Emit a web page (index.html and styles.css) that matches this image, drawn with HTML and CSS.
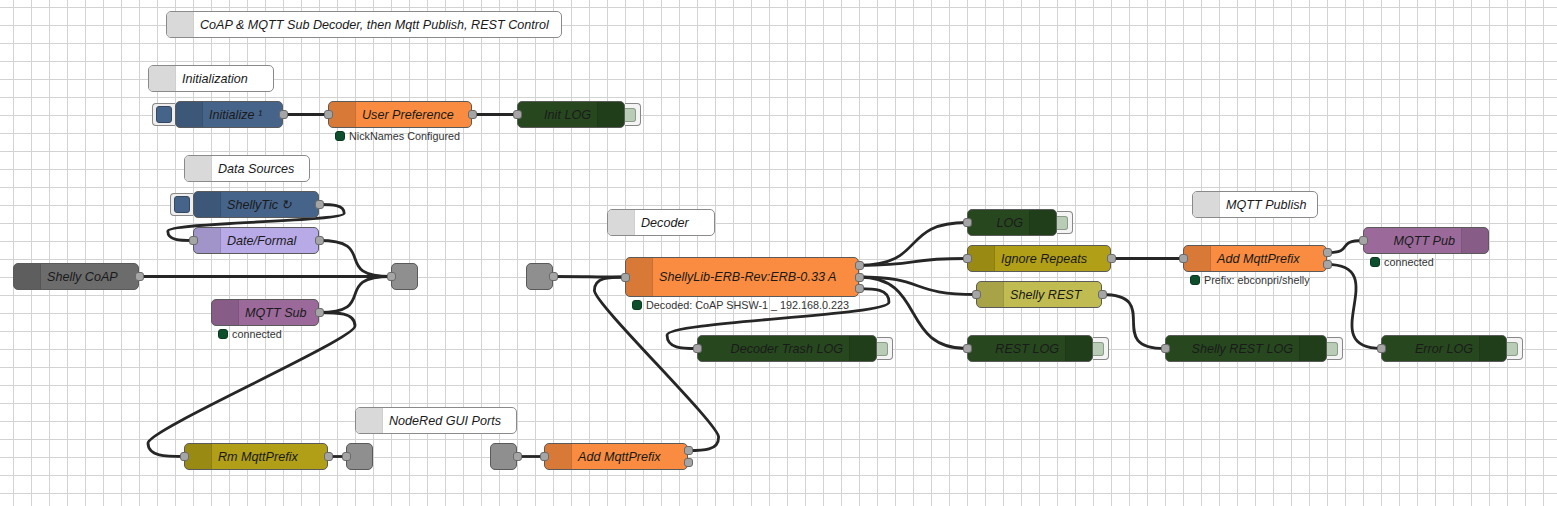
FILE: index.html
```html
<!DOCTYPE html>
<html lang="en">
    <head>
        <meta charset="UTF-8">
        <title>Shelly flow</title>
        <link rel="stylesheet" href="styles.css">
    </head>
    <body>
        <div class="canvas">
            <svg class="wires" id="wires" width="1557" height="506"></svg>

            <!-- comments -->
            <div class="node comment" id="c-title"><div class="icon"></div><span class="label">CoAP &amp; MQTT Sub Decoder, then Mqtt Publish, REST Control</span></div>
            <div class="node comment" id="c-init"><div class="icon"></div><span class="label">Initialization</span></div>
            <div class="node comment" id="c-src"><div class="icon"></div><span class="label">Data Sources</span></div>
            <div class="node comment" id="c-dec"><div class="icon"></div><span class="label">Decoder</span></div>
            <div class="node comment" id="c-pub"><div class="icon"></div><span class="label">MQTT Publish</span></div>
            <div class="node comment" id="c-gui"><div class="icon"></div><span class="label">NodeRed GUI Ports</span></div>

            <!-- initialization -->
            <div class="node inject" id="n-init">
                <div class="ibtn"><span></span></div>
                <div class="icon"></div><span class="label">Initialize ¹</span>
                <i class="port out"></i>
            </div>
            <div class="node orange" id="n-pref">
                <div class="icon"></div><span class="label">User Preference</span>
                <i class="port in"></i><i class="port out"></i>
                <div class="status"><b></b>NickNames Configured</div>
            </div>
            <div class="node debug right" id="n-initlog">
                <div class="dbtn"><span></span></div>
                <div class="icon"></div><span class="label">Init LOG</span>
                <i class="port in"></i>
            </div>

            <!-- data sources -->
            <div class="node inject" id="n-tic">
                <div class="ibtn"><span></span></div>
                <div class="icon"></div><span class="label">ShellyTic ↻</span>
                <i class="port out"></i>
            </div>
            <div class="node lavender" id="n-date">
                <div class="icon"></div><span class="label">Date/Formal</span>
                <i class="port in"></i><i class="port out"></i>
            </div>
            <div class="node grey" id="n-coap">
                <div class="icon"></div><span class="label">Shelly CoAP</span>
                <i class="port out"></i>
            </div>
            <div class="node link" id="n-jout"><i class="port in"></i></div>
            <div class="node purple" id="n-msub">
                <div class="icon"></div><span class="label">MQTT Sub</span>
                <i class="port out"></i>
                <div class="status"><b></b>connected</div>
            </div>

            <!-- decoder -->
            <div class="node link" id="n-jin"><i class="port out"></i></div>
            <div class="node orange" id="n-lib">
                <div class="icon"></div><span class="label">ShellyLib-ERB-Rev:ERB-0.33 A</span>
                <i class="port in"></i>
                <i class="port out o3a"></i><i class="port out o3b"></i><i class="port out o3c"></i>
                <div class="status"><b></b>Decoded: CoAP SHSW-1 _ 192.168.0.223</div>
            </div>
            <div class="node debug right" id="n-log">
                <div class="dbtn"><span></span></div>
                <div class="icon"></div><span class="label">LOG</span>
                <i class="port in"></i>
            </div>
            <div class="node olive" id="n-ign">
                <div class="icon"></div><span class="label">Ignore Repeats</span>
                <i class="port in"></i><i class="port out"></i>
            </div>
            <div class="node khaki" id="n-rest">
                <div class="icon"></div><span class="label">Shelly REST</span>
                <i class="port in"></i><i class="port out"></i>
            </div>
            <div class="node debug right" id="n-trash">
                <div class="dbtn"><span></span></div>
                <div class="icon"></div><span class="label">Decoder Trash LOG</span>
                <i class="port in"></i>
            </div>
            <div class="node debug right" id="n-restlog">
                <div class="dbtn"><span></span></div>
                <div class="icon"></div><span class="label">REST LOG</span>
                <i class="port in"></i>
            </div>

            <!-- mqtt publish -->
            <div class="node orange" id="n-addp">
                <div class="icon"></div><span class="label">Add MqttPrefix</span>
                <i class="port in"></i>
                <i class="port out o2a"></i><i class="port out o2b"></i>
                <div class="status"><b></b>Prefix: ebconpri/shelly</div>
            </div>
            <div class="node purple right" id="n-mpub">
                <div class="icon"></div><span class="label">MQTT Pub</span>
                <i class="port in"></i>
                <div class="status"><b></b>connected</div>
            </div>
            <div class="node debug right" id="n-srlog">
                <div class="dbtn"><span></span></div>
                <div class="icon"></div><span class="label">Shelly REST LOG</span>
                <i class="port in"></i>
            </div>
            <div class="node debug right" id="n-err">
                <div class="dbtn"><span></span></div>
                <div class="icon"></div><span class="label">Error LOG</span>
                <i class="port in"></i>
            </div>

            <!-- gui ports -->
            <div class="node olive" id="n-rm">
                <div class="icon"></div><span class="label">Rm MqttPrefix</span>
                <i class="port in"></i><i class="port out"></i>
            </div>
            <div class="node link" id="n-gout"><i class="port in"></i></div>
            <div class="node link" id="n-gin"><i class="port out"></i></div>
            <div class="node orange" id="n-addb">
                <div class="icon"></div><span class="label">Add MqttPrefix</span>
                <i class="port in"></i>
                <i class="port out o2a"></i><i class="port out o2b"></i>
            </div>
        </div>
        <script>
            // node-red style wire curves, canvas scale 0.9
            var NW = 90;
            var NH = 27;

            function linkPath(ox, oy, tx, ty) {
                var dy = ty - oy;
                var dx = tx - ox;
                var delta = Math.sqrt(dy * dy + dx * dx);
                var scale = 0.75;
                if (dx > 0) {
                    if (delta < NW) {
                        scale = 0.75 - 0.75 * ((NW - delta) / NW);
                    }
                    return "M " + ox + " " + oy + " C " + (ox + NW * scale) + " " + oy + " " +
                        (tx - NW * scale) + " " + ty + " " + tx + " " + ty;
                }
                scale = 0.4 - 0.2 * Math.max(0, (NW - Math.min(Math.abs(dx), Math.abs(dy))) / NW);
                var midY = Math.floor(ty - dy / 2);
                if (dy === 0) {
                    midY = ty + NH;
                }
                var cpH = NH / 2;
                var y1 = (ty + midY) / 2;
                var topX = ox + NW * scale;
                var topY = dy > 0 ? Math.min(y1 - dy / 2, oy + cpH) : Math.max(y1 - dy / 2, oy - cpH);
                var bottomX = tx - NW * scale;
                var bottomY = dy > 0 ? Math.max(y1, ty - cpH) : Math.min(y1, ty + cpH);
                var scy = dy > 0 ? 1 : -1;
                var cp = [
                    [(ox + topX) / 2, oy],
                    [topX, dy > 0 ? Math.max(oy, topY - cpH) : Math.min(oy, topY + cpH)],
                    [bottomX, dy > 0 ? Math.max(midY, bottomY - cpH) : Math.min(midY, bottomY + cpH)],
                    [(tx + bottomX) / 2, ty]
                ];
                if (cp[2][1] === topY + scy * cpH) {
                    if (Math.abs(dy) < cpH * 10) {
                        cp[1][1] = topY - scy * cpH / 2;
                        cp[3][1] = bottomY - scy * cpH / 2;
                    }
                    cp[2][1] = topY + scy * cpH;
                }
                return "M " + ox + " " + oy +
                    " C " + cp[0][0] + " " + cp[0][1] + " " + cp[1][0] + " " + cp[1][1] + " " + topX + " " + topY +
                    " S " + cp[2][0] + " " + cp[2][1] + " " + bottomX + " " + bottomY +
                    " S " + cp[3][0] + " " + cp[3][1] + " " + tx + " " + ty;
            }

            var wires = [
                [283, 114.5, 328, 114.5],
                [472, 114.5, 517, 114.5],
                [319, 204.5, 193, 240.5],
                [319, 240.5, 391, 276.5],
                [139, 276.5, 391, 276.5],
                [319, 312.5, 391, 276.5],
                [319, 312.5, 184, 456.5],
                [328, 456.5, 346, 456.5],
                [517, 456.5, 544, 456.5],
                [688, 450.65, 625, 277],
                [553, 276.5, 625, 277],
                [859, 265.3, 967, 222.5],
                [859, 265.3, 967, 258.5],
                [859, 277, 976, 294.5],
                [859, 277, 967, 348.5],
                [859, 288.7, 697, 348.5],
                [1111, 258.5, 1183, 258.5],
                [1102, 294.5, 1165, 348.5],
                [1327, 252.65, 1363, 240.5],
                [1327, 264.35, 1381, 348.5]
            ];

            var svg = document.getElementById("wires");
            for (var i = 0; i < wires.length; i++) {
                var w = wires[i];
                var path = document.createElementNS("http://www.w3.org/2000/svg", "path");
                path.setAttribute("d", linkPath(w[0], w[1], w[2], w[3]));
                svg.appendChild(path);
            }
        </script>
    </body>
</html>
```

FILE: styles.css
```css
body {
    margin: 0;
    overflow: hidden;
}

.canvas {
    position: relative;
    width: 1557px;
    height: 506px;
    overflow: hidden;
    background-color: #fff;
    background-image:
        linear-gradient(to right, #d3d3d3 1px, transparent 1px),
        linear-gradient(to bottom, #d3d3d3 1px, transparent 1px);
    background-size: 18px 18px;
    background-position: 13px 7px;
}

.wires {
    position: absolute;
    left: 0;
    top: 0;
}

.wires path {
    fill: none;
    stroke: #262626;
    stroke-width: 2.8;
}

/* nodes */
.node {
    position: absolute;
    box-sizing: border-box;
    height: 27px;
    border: 1px solid #5a5a5a;
    border-radius: 5px;
    display: flex;
    align-items: center;
    font-family: "Liberation Sans", Arial, sans-serif;
    font-style: italic;
    font-size: 12.6px;
    color: #1a1a1a;
}

.icon {
    position: absolute;
    left: 0;
    top: 0;
    bottom: 0;
    width: 26px;
    background: rgba(0, 0, 0, 0.13);
    border-right: 1px solid rgba(0, 0, 0, 0.08);
    border-radius: 4px 0 0 4px;
}

.label {
    position: relative;
    padding-left: 33px;
    white-space: nowrap;
}

.node.right {
    justify-content: flex-end;
}

.node.right .icon {
    left: auto;
    right: 0;
    border-right: none;
    border-left: 1px solid rgba(0, 0, 0, 0.08);
    border-radius: 0 4px 4px 0;
}

.node.right .label {
    padding-left: 0;
    padding-right: 33px;
}

.comment {
    background: #fff;
    border-color: #8a8a8a;
}

.comment .icon {
    background: #d9d9d9;
    border-right: 1px solid #cfcfcf;
}

.inject { background: #46648a; }
.orange { background: #f98c41; }
.debug { background: #27481f; }
.lavender { background: #b8aae7; }
.grey { background: #6c6c6c; }
.purple { background: #9b6a9b; }
.olive { background: #b09f17; }
.khaki { background: #c1bc52; }

.link {
    width: 27px;
    background: #8f8f8f;
}

/* ports */
.port {
    position: absolute;
    box-sizing: border-box;
    width: 9px;
    height: 9px;
    top: calc(50% - 4.5px);
    background: #a5a5a5;
    border: 1px solid #6a6a6a;
    border-radius: 3px;
}

.port.in {
    left: -5.5px;
}

.port.out {
    right: -5.5px;
}

.port.o3a { top: 3px; }
.port.o3b { top: 14.7px; }
.port.o3c { top: 26.4px; }
.port.o2a { top: 2.2px; }
.port.o2b { top: 13.9px; }

/* inject and debug buttons */
.ibtn {
    position: absolute;
    left: -24px;
    top: 1px;
    box-sizing: border-box;
    width: 23px;
    height: 23px;
    background: #eee;
    border: 1px solid #888;
    border-right: none;
    border-radius: 4px 0 0 4px;
}

.ibtn span {
    position: absolute;
    left: 3px;
    top: 2px;
    box-sizing: border-box;
    width: 16px;
    height: 17px;
    background: #46648a;
    border: 1px solid #34485f;
    border-radius: 3px;
}

.dbtn {
    position: absolute;
    right: -17px;
    top: 1px;
    box-sizing: border-box;
    width: 16px;
    height: 23px;
    background: #f4f4f4;
    border: 1px solid #888;
    border-left: none;
    border-radius: 0 4px 4px 0;
}

.dbtn span {
    position: absolute;
    left: 0;
    top: 4px;
    box-sizing: border-box;
    width: 11px;
    height: 14px;
    background: #b9ccb5;
    border: 1px solid #8b9c88;
    border-left: none;
    border-radius: 0 3px 3px 0;
}

/* status */
.status {
    position: absolute;
    left: 6px;
    top: calc(100% + 3px);
    display: flex;
    align-items: center;
    gap: 4px;
    font-style: normal;
    font-size: 10.8px;
    line-height: 12px;
    color: #333;
    white-space: nowrap;
}

.status b {
    display: block;
    width: 10px;
    height: 10px;
    box-sizing: border-box;
    background: #0d4f2c;
    border: 1px solid #0a3a20;
    border-radius: 3px;
}

/* positions on the canvas */
#c-title { left: 166px; top: 11px; width: 396px; }
#c-init { left: 148px; top: 65px; width: 126px; }
#c-src { left: 184px; top: 155px; width: 126px; }
#c-dec { left: 607px; top: 209px; width: 108px; }
#c-pub { left: 1192px; top: 191px; width: 126px; }
#c-gui { left: 355px; top: 407px; width: 162px; }

#n-init { left: 175px; top: 101px; width: 108px; }
#n-pref { left: 328px; top: 101px; width: 144px; }
#n-initlog { left: 517px; top: 101px; width: 108px; }
#n-tic { left: 193px; top: 191px; width: 126px; }
#n-date { left: 193px; top: 227px; width: 126px; }
#n-coap { left: 13px; top: 263px; width: 126px; }
#n-jout { left: 391px; top: 263px; }
#n-msub { left: 211px; top: 299px; width: 108px; }
#n-jin { left: 526px; top: 263px; }
#n-lib { left: 625px; top: 257px; width: 234px; height: 40px; }
#n-log { left: 967px; top: 209px; width: 90px; }
#n-ign { left: 967px; top: 245px; width: 144px; }
#n-rest { left: 976px; top: 281px; width: 126px; }
#n-trash { left: 697px; top: 335px; width: 180px; }
#n-restlog { left: 967px; top: 335px; width: 126px; }
#n-addp { left: 1183px; top: 245px; width: 144px; }
#n-mpub { left: 1363px; top: 227px; width: 126px; }
#n-srlog { left: 1165px; top: 335px; width: 162px; }
#n-err { left: 1381px; top: 335px; width: 126px; }
#n-rm { left: 184px; top: 443px; width: 144px; }
#n-gout { left: 346px; top: 443px; }
#n-gin { left: 490px; top: 443px; }
#n-addb { left: 544px; top: 443px; width: 144px; }
```
